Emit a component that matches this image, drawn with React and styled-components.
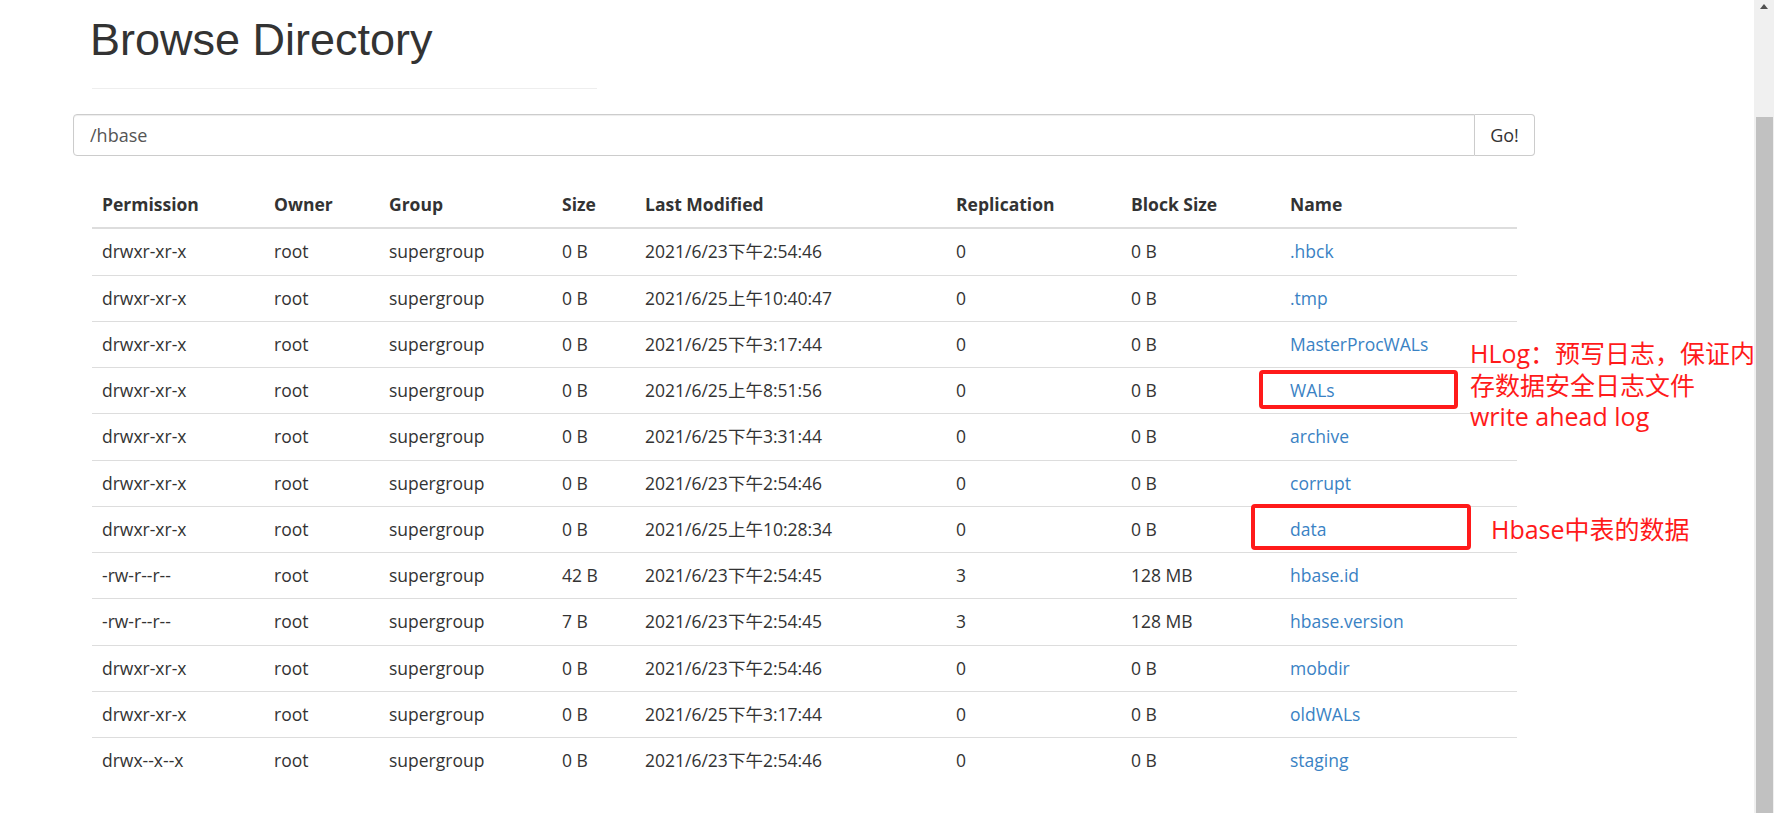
import React from 'react';
import styled, { createGlobalStyle } from 'styled-components';

const GlobalStyle = createGlobalStyle`
  html, body {
    margin: 0;
    padding: 0;
    background: #fff;
  }
  body {
    font-family: "Open Sans", "Noto Sans CJK SC", sans-serif;
    color: #333;
    overflow: hidden;
  }
`;

const columns = [
  { label: 'Permission', width: 172 },
  { label: 'Owner', width: 115 },
  { label: 'Group', width: 173 },
  { label: 'Size', width: 83 },
  { label: 'Last Modified', width: 311 },
  { label: 'Replication', width: 175 },
  { label: 'Block Size', width: 159 },
  { label: 'Name', width: 237 },
];

const DIR = 'drwxr-xr-x';

const files = [
  [DIR, '0 B', '2021/6/23下午2:54:46', '0', '0 B', '.hbck'],
  [DIR, '0 B', '2021/6/25上午10:40:47', '0', '0 B', '.tmp'],
  [DIR, '0 B', '2021/6/25下午3:17:44', '0', '0 B', 'MasterProcWALs'],
  [DIR, '0 B', '2021/6/25上午8:51:56', '0', '0 B', 'WALs'],
  [DIR, '0 B', '2021/6/25下午3:31:44', '0', '0 B', 'archive'],
  [DIR, '0 B', '2021/6/23下午2:54:46', '0', '0 B', 'corrupt'],
  [DIR, '0 B', '2021/6/25上午10:28:34', '0', '0 B', 'data'],
  ['-rw-r--r--', '42 B', '2021/6/23下午2:54:45', '3', '128 MB', 'hbase.id'],
  ['-rw-r--r--', '7 B', '2021/6/23下午2:54:45', '3', '128 MB', 'hbase.version'],
  [DIR, '0 B', '2021/6/23下午2:54:46', '0', '0 B', 'mobdir'],
  [DIR, '0 B', '2021/6/25下午3:17:44', '0', '0 B', 'oldWALs'],
  ['drwx--x--x', '0 B', '2021/6/23下午2:54:46', '0', '0 B', 'staging'],
];

export default function App() {
  return (
    <>
      <GlobalStyle />
      <Shell>
        <Main>
          <Content>
            <PageHeader>
              <Title>Browse Directory</Title>
            </PageHeader>

            <InputGroup>
              <PathInput defaultValue="/hbase" />
              <GoButton>Go!</GoButton>
            </InputGroup>

            <Table>
              <thead>
                <tr>
                  {columns.map((c) => (
                    <Th key={c.label} $w={c.width}>
                      {c.label}
                    </Th>
                  ))}
                </tr>
              </thead>
              <tbody>
                {files.map(([perm, size, modified, repl, block, name]) => (
                  <tr key={name}>
                    <Td>{perm}</Td>
                    <Td>root</Td>
                    <Td>supergroup</Td>
                    <Td>{size}</Td>
                    <Td>{modified}</Td>
                    <Td>{repl}</Td>
                    <Td>{block}</Td>
                    <Td>
                      <FileLink href="#">{name}</FileLink>
                    </Td>
                  </tr>
                ))}
              </tbody>
            </Table>
          </Content>

          {/* hand-drawn annotations on top of the screenshot */}
          <Highlight $x={1259} $y={370} $w={199} $h={39} />
          <Highlight $x={1251} $y={504} $w={220} $h={46} />
          <Note $x={1470} $y={338}>
            HLog：预写日志，保证内
            <br />
            存数据安全日志文件
            <br />
            write ahead log
          </Note>
          <Note $x={1491} $y={514}>
            Hbase中表的数据
          </Note>
        </Main>

        <Scrollbar>
          <ArrowUp />
          <Thumb />
        </Scrollbar>
      </Shell>
    </>
  );
}

const Shell = styled.div`
  display: flex;
  height: 100vh;
  overflow: hidden;
`;

const Main = styled.main`
  flex: 1;
  position: relative;
  overflow: hidden;
  padding: 15px 0 0 92px;
`;

const Content = styled.div`
  width: 1425px;
  display: flex;
  flex-direction: column;
  align-items: stretch;
`;

const PageHeader = styled.div`
  width: 505px;
  padding-bottom: 23.5px;
  border-bottom: 1px solid #eee;
`;

const Title = styled.h1`
  margin: 0 0 0 -2px;
  font-family: "Liberation Sans", Arial, sans-serif;
  font-weight: 400;
  font-size: 45px;
  line-height: 49.5px;
  color: #333;
`;

const InputGroup = styled.div`
  display: flex;
  height: 42px;
  margin: 25px -18px 0 -19px;
`;

const PathInput = styled.input`
  flex: 1;
  min-width: 0;
  box-sizing: border-box;
  height: 100%;
  padding: 0 16px;
  border: 1px solid #ccc;
  border-radius: 4px 0 0 4px;
  box-shadow: inset 0 1px 1px rgba(0, 0, 0, 0.075);
  font-family: "Open Sans", sans-serif;
  font-size: 18px;
  color: #555;
  outline: none;
`;

const GoButton = styled.button`
  width: 60px;
  box-sizing: border-box;
  height: 100%;
  border: 1px solid #ccc;
  border-left: none;
  border-radius: 0 4px 4px 0;
  background: #fff;
  font-family: "Open Sans", sans-serif;
  font-size: 18px;
  color: #333;
  padding: 0;
  cursor: pointer;
`;

const Table = styled.table`
  margin-top: 26px;
  width: 1425px;
  border-collapse: collapse;
  table-layout: fixed;
  font-size: 17.5px;
  line-height: 25.25px;
`;

const Th = styled.th`
  width: ${(p) => p.$w}px;
  box-sizing: border-box;
  padding: 10px;
  text-align: left;
  font-weight: 700;
  color: #333;
  border-bottom: 2px solid #ddd;
  white-space: nowrap;
`;

const Td = styled.td`
  padding: 10px;
  border-top: 1px solid #ddd;
  white-space: nowrap;
  color: #333;
`;

const FileLink = styled.a`
  color: #3a82c4;
  text-decoration: none;
`;

const Highlight = styled.div`
  position: absolute;
  left: ${(p) => p.$x}px;
  top: ${(p) => p.$y}px;
  width: ${(p) => p.$w}px;
  height: ${(p) => p.$h}px;
  box-sizing: border-box;
  border: 4px solid #ff1a1a;
  border-radius: 4px;
`;

const Note = styled.div`
  position: absolute;
  left: ${(p) => p.$x}px;
  top: ${(p) => p.$y}px;
  font-family: "Open Sans", "Noto Sans CJK SC", sans-serif;
  font-size: 25px;
  line-height: 31.5px;
  color: #ff1a1a;
  white-space: nowrap;
`;

const Scrollbar = styled.div`
  width: 20px;
  flex-shrink: 0;
  background: #f0f0f0;
  display: flex;
  flex-direction: column;
  align-items: center;
`;

const ArrowUp = styled.div`
  margin-top: 4px;
  width: 0;
  height: 0;
  border-left: 4.5px solid transparent;
  border-right: 4.5px solid transparent;
  border-bottom: 5px solid #505050;
`;

const Thumb = styled.div`
  margin-top: 108px;
  align-self: flex-start;
  margin-left: 2px;
  width: 17px;
  flex: 1;
  background: #c1c1c1;
`;
